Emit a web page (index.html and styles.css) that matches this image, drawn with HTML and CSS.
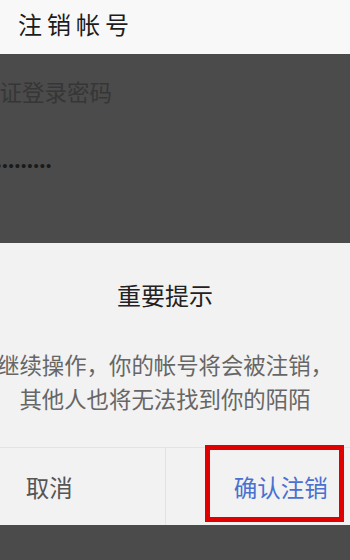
FILE: index.html
```html
<!DOCTYPE html>
<html lang="zh-CN">
<head>
<meta charset="utf-8">
<title>注销帐号</title>
<link rel="stylesheet" href="styles.css">
</head>
<body>
<div class="page">
  <header class="header">
    <h1 class="header-title">注销帐号</h1>
  </header>
  <section class="screen">
    <div class="field-label">验证登录密码</div>
    <div class="field-dots">•••••••••</div>
  </section>
  <section class="dialog">
    <h2 class="dialog-title">重要提示</h2>
    <p class="dialog-msg">继续操作，你的帐号将会被注销，<br>其他人也将无法找到你的陌陌</p>
    <div class="dialog-actions">
      <div class="btn btn-cancel">取消</div>
      <div class="btn btn-confirm">确认注销<span class="highlight"></span></div>
    </div>
  </section>
  <div class="footer-shade"></div>
</div>
</body>
</html>
```

FILE: styles.css
```css
html, body {
  margin: 0;
  padding: 0;
}
body {
  width: 350px;
  height: 560px;
  overflow: hidden;
  background: #4b4b4b;
  font-family: "Noto Sans CJK SC", "Noto Sans", sans-serif;
}
.page {
  display: flex;
  flex-direction: column;
  width: 350px;
  height: 560px;
  overflow: hidden;
}
.header {
  height: 54px;
  flex: none;
  background: #f8f8f8;
  padding-left: 18px;
  box-sizing: border-box;
}
.header-title {
  margin: 0;
  font-size: 24px;
  font-weight: 400;
  line-height: 47px;
  letter-spacing: 5px;
  color: #1c1c1c;
}
.screen {
  height: 189px;
  flex: none;
  background: #4b4b4b;
  padding-top: 24px;
  box-sizing: border-box;
}
.field-label {
  margin-left: -23px;
  font-size: 22.5px;
  line-height: 26px;
  color: #363636;
  white-space: nowrap;
}
.field-dots {
  margin-top: 52px;
  margin-left: -4px;
  font-family: "Liberation Sans", sans-serif;
  font-size: 15px;
  line-height: 20px;
  letter-spacing: 1px;
  color: #1a1a1a;
}
.dialog {
  height: 282px;
  flex: none;
  width: 462px;
  margin-left: -66px;
  background: #f2f2f2;
  display: flex;
  flex-direction: column;
  align-items: stretch;
}
.dialog-title {
  margin: 32px 0 0;
  font-size: 24px;
  font-weight: 400;
  line-height: 40px;
  text-align: center;
  color: #222;
}
.dialog-msg {
  margin: 32px 0 0;
  font-size: 22.4px;
  line-height: 34px;
  text-align: center;
  color: #666;
  white-space: nowrap;
}
.dialog-actions {
  margin-top: auto;
  height: 78px;
  border-top: 1px solid #e4e4e4;
  box-sizing: border-box;
  display: flex;
}
.btn {
  flex: 1;
  display: flex;
  align-items: center;
  justify-content: center;
  font-size: 23.5px;
  position: relative;
}
.btn-cancel {
  color: #555;
  border-right: 1px solid #e4e4e4;
}
.btn-confirm {
  color: #4a70d0;
}
.highlight {
  position: absolute;
  left: 39px;
  top: -3px;
  width: 139px;
  height: 77px;
  border: 5px solid #e00000;
  box-sizing: border-box;
}
.footer-shade {
  flex: 1;
  background: #4b4b4b;
}
```
